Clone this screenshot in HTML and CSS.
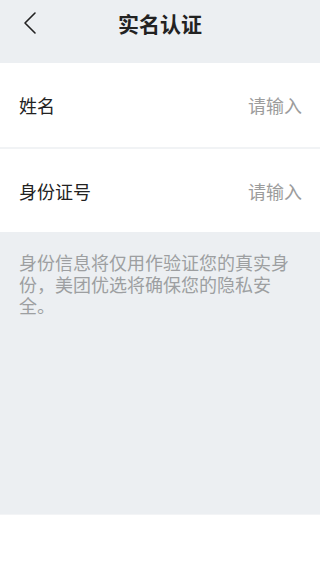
FILE: index.html
```html
<!DOCTYPE html>
<html lang="zh-CN">
<head>
    <meta charset="UTF-8">
    <meta name="viewport" content="width=device-width, initial-scale=1.0">
    <title>实名认证</title>
    <link rel="stylesheet" href="styles.css">
</head>
<body>
    <div class="page">
        <!-- Header -->
        <header class="header">
            <a class="back" href="javascript:void(0);">
                <svg width="14" height="24" viewBox="0 0 14 24">
                    <path d="M12 2 L2 12 L12 22" fill="none" stroke="#222" stroke-width="1.6" stroke-linecap="round" stroke-linejoin="round"/>
                </svg>
            </a>
            <h1>实名认证</h1>
            <span></span>
        </header>

        <!-- Form -->
        <div class="form">
            <label class="row">
                <span class="label">姓名</span>
                <input type="text" placeholder="请输入">
            </label>
            <label class="row">
                <span class="label">身份证号</span>
                <input type="text" placeholder="请输入">
            </label>
        </div>

        <p class="note">身份信息将仅用作验证您的真实身份，美团优选将确保您的隐私安全。</p>

        <div class="spacer"></div>
        <div class="bottom"></div>
    </div>
</body>
</html>
```

FILE: styles.css
```css
body {
    margin: 0;
    padding: 0;
    font-family: "Noto Sans CJK SC", "Noto Sans", sans-serif;
    background: #eceff2;
    color: #222;
}
.page {
    height: 569px;
    display: flex;
    flex-direction: column;
}
.header {
    height: 46px;
    padding-bottom: 17px;
    display: grid;
    grid-template-columns: 1fr auto 1fr;
    align-items: center;
    background: #eceff2;
}
.header h1 {
    margin: 0;
    font-size: 21px;
    font-weight: bold;
    color: #222;
}
.back {
    display: flex;
    align-items: center;
    padding-left: 23px;
    height: 46px;
}
.form {
    display: flex;
    flex-direction: column;
    gap: 2px;
    background: #f1f3f5;
}
.row {
    height: 84px;
    display: flex;
    align-items: center;
    justify-content: space-between;
    padding: 0 18px 0 19px;
    background: #fff;
}
.row:last-child {
    height: 83px;
}
.label {
    font-size: 18px;
    color: #222;
}
.row input {
    border: none;
    outline: none;
    background: transparent;
    text-align: right;
    font-family: inherit;
    font-size: 18px;
    width: 120px;
    padding: 0;
    color: #222;
}
.row input::placeholder {
    color: #9c9c9c;
}
.note {
    margin: 0;
    padding: 20px 19px 0;
    font-size: 18px;
    line-height: 21.5px;
    color: #9d9fa1;
}
.spacer {
    flex: 1;
}
.bottom {
    height: 54px;
    background: #fff;
    border-top: 1px solid #f3f4f6;
}
```
